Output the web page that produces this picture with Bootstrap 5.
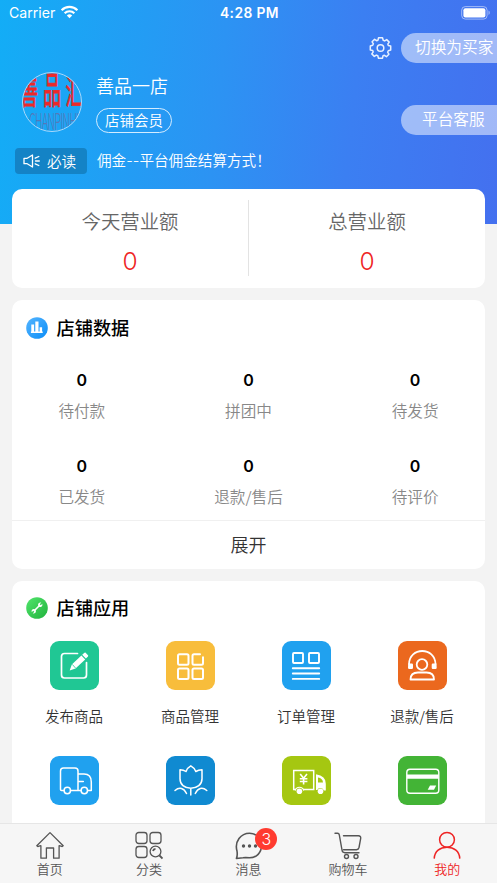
<!DOCTYPE html>
<html lang="zh-CN">
<head>
<meta charset="utf-8">
<meta name="viewport" content="width=device-width, initial-scale=1">
<title>我的店铺</title>
<link href="https://cdn.jsdelivr.net/npm/bootstrap@5.3.0/dist/css/bootstrap.min.css" rel="stylesheet">
<style>
body{height:883px;background:#f3f3f3;font-family:"Noto Sans CJK SC",sans-serif;font-weight:350;line-height:1;color:#444}
svg{display:block;flex:none}
.latin{font-family:Inter,"Noto Sans CJK SC",sans-serif}
.page-body{min-height:0}
.hero{height:224px;flex:none;background:linear-gradient(96deg,#13adf6 0%,#2c93f3 44%,#3b7ff2 70%,#4470ef 100%)}
.status-bar{height:33px;padding:6px 7px 0 9px;font-size:14.1px;line-height:14px}
.status-side{width:110px;gap:5px}
.wifi{margin-top:-1px}
.status-time{font-weight:600;font-size:13.8px;letter-spacing:.4px}
.hero-main{height:102px}
.profile{padding:39px 0 0 22px;gap:14px}
.shop-name{font-size:18px;line-height:20px;margin-top:3px}
.member{height:25px;width:76px;margin-top:13px;border:1px solid #d4ecff;font-size:14.5px;line-height:22px}
.settings{gap:7.5px}
.pill{width:96px;height:30px;background:rgba(255,255,255,.5);border-radius:15px 0 0 15px;font-size:15.7px;line-height:28.5px;white-space:nowrap}
.pill-switch{padding-left:14px}
.pill-service{padding-left:21px}
.notice{margin:13px 0 0 15px;font-size:14.6px}
.notice-tag{width:72px;height:26px;background:#1483c6;border-radius:4px;padding-left:8px;gap:7px}
.notice-text{margin-left:10px}
.panel{background:#fff;border-radius:10px;margin:0 12px 12px}
.revenue{height:99.5px;margin-top:-35.5px}
.revenue-item{padding-top:21.5px}
.revenue-label{font-size:19.4px;line-height:22px;color:#666}
.revenue-value{font-size:24.5px;line-height:26px;color:#ee2424;margin-top:16px}
.split{width:1px;height:76px;margin-top:11px;background:#e3e3e3}
.panel-title{font-size:18.2px;line-height:22px;color:#000;font-weight:500;padding:16.500px 0 0 14px;gap:8.500px}
.panel-title span{margin-top:-2px}
.shop-data{height:268.5px}
.counters{margin:32px -13.5px 0;row-gap:36.3px}
.counter{height:50px}
.counter-value{font-size:16px;line-height:18px;color:#000;font-weight:600}
.counter-label{font-size:15.600px;line-height:20px;color:#888;margin-top:11px}
.expand{height:48.500px;border-top:1.500px solid #f0f0f0;font-size:18px;line-height:46px;color:#333}
.apps{padding:22px 5px 0 4px}
.app-item{height:115.300px}
.app-label{font-size:14.500px;line-height:20px;margin-top:15.500px;color:#333}
.tabs{height:60px;flex:none;background:#f6f6f6;border-top:1px solid #e6e6e6;color:#555;font-size:13px}
.tab-item{padding-top:7px}
.tab-label{line-height:18px}
.tab-item.current{color:#ee2424}
.count-badge{left:56.500px;top:3.500px;width:22px;height:22px;background:#ff3b30;font-size:16px;line-height:22px}
</style>
</head>
<body class="d-flex flex-column overflow-hidden m-0">
<main class="page-body flex-grow-1 overflow-hidden d-flex flex-column">
  <header class="hero text-white">
    <div class="status-bar d-flex justify-content-between latin">
      <div class="status-side d-flex fw-normal"><span>Carrier</span>
        <svg class="wifi" width="19" height="14" viewBox="0 0 20 14"><g fill="none" stroke="#fff" stroke-width="2.3"><path d="M1.7 5.1a11.6 11.6 0 0 1 16.6 0"/><path d="M4.9 8.4a7.1 7.1 0 0 1 10.2 0"/></g><path d="M10 13.500 7.200 10.700a3.900 3.900 0 0 1 5.600 0z" fill="#fff"/></svg>
      </div>
      <div class="status-time">4:28 PM</div>
      <div class="status-side d-flex justify-content-end"><svg width="29" height="14" viewBox="0 0 29 14"><rect x=".7" y=".6" width="25.400" height="12.500" rx="3.600" fill="none" stroke="#fff" stroke-opacity=".5"/><rect x="2.400" y="2.300" width="22" height="9.100" rx="2" fill="#fff"/><path d="M27.500 4.600q1.300.6 1.300 2.200t-1.300 2.200z" fill="#fff" opacity=".5"/></svg></div>
    </div>
    <div class="hero-main d-flex justify-content-between">
      <div class="profile d-flex">
        <svg width="60" height="60" viewBox="0 0 60 60">
          <defs><clipPath id="round"><circle cx="30" cy="30" r="29.500"/></clipPath></defs>
          <g clip-path="url(#round)" text-anchor="middle" font-family="Noto Sans CJK SC">
            <g fill="#ec2929" stroke="#ec2929" stroke-width=".5" font-weight="400" font-size="20">
              <text transform="translate(7 32) scale(.9 1.720)">善</text>
              <text transform="translate(30 32) scale(.9 1.860)">品</text>
              <text transform="translate(52.500 32) scale(.9 1.720)">汇</text>
            </g>
            <text transform="translate(35.500 57.500) scale(.62 1.350)" font-size="17" font-weight="300" fill="#5877b7" textLength="92">CHANPINHUI</text>
          </g>
          <circle cx="30" cy="30" r="29.500" fill="none" stroke="#a9d8fa"/>
        </svg>
        <div>
          <div class="shop-name">善品一店</div>
          <div class="member rounded-pill text-center">店铺会员</div>
        </div>
      </div>
      <div class="d-flex flex-column justify-content-between align-items-end">
        <div class="settings d-flex align-items-center">
          <svg width="26" height="24" viewBox="-12.500 -12 26 24" fill="none" stroke="#e8f1ff" stroke-width="1.500" stroke-linejoin="round"><circle r="3.300"/><path d="M-2-10.200H2L2.700-7.800 4.200-7.100 6.200-8.400 8.700-5.900 7.300-3.900 7.800-2.500 10.200-2V2L7.800 2.700 7.100 4.200 8.400 6.200 5.900 8.700 3.900 7.300 2.500 7.800 2 10.200H-2L-2.700 7.800-4.200 7.100-6.200 8.400-8.700 5.900-7.300 3.900-7.800 2.500-10.200 2V-2L-7.800-2.700-7.100-4.200-8.400-6.200-5.900-8.700-3.900-7.300-2.500-7.800z"/></svg>
          <div class="pill pill-switch">切换为买家</div>
        </div>
        <div class="pill pill-service">平台客服</div>
      </div>
    </div>
    <div class="notice d-flex align-items-center">
      <div class="notice-tag d-flex align-items-center">
        <svg width="17" height="14" viewBox="0 0 17 14" fill="none" stroke="#fff" stroke-width="1.300" stroke-linecap="round" stroke-linejoin="round"><path d="M1 4.300h3.200L9.500 1v12L4.200 9.700H1zM12.200 4.200l3.600-1.700M12.500 7h3.800M12.200 9.800l3.600 1.700"/></svg>
        <span>必读</span>
      </div>
      <span class="notice-text">佣金<span class="latin">--</span>平台佣金结算方式！</span>
    </div>
  </header>

  <section class="panel revenue d-flex flex-shrink-0">
    <div class="revenue-item text-center flex-fill w-50">
      <div class="revenue-label">今天营业额</div><div class="revenue-value latin">0</div>
    </div>
    <div class="split flex-shrink-0"></div>
    <div class="revenue-item text-center flex-fill w-50">
      <div class="revenue-label">总营业额</div><div class="revenue-value latin">0</div>
    </div>
  </section>

  <section class="panel shop-data flex-shrink-0 d-flex flex-column">
    <div class="panel-title d-flex align-items-center">
      <svg width="22" height="22" viewBox="0 0 22 22"><defs><linearGradient id="blue" x2="1" y2="1"><stop stop-color="#55b5ff"/><stop offset="1" stop-color="#0b8df7"/></linearGradient></defs><circle cx="11" cy="11" r="10.800" fill="url(#blue)"/><path d="M5.300 7.500h2.800v7.600H5.300zM9.300 4.500h3.200v10.600H9.300zM13.600 10.300h2.500v4.800h-2.500zM4.900 14.600h11.800v1.300H4.900z" fill="#fff"/></svg>
      <span>店铺数据</span>
    </div>
    <div class="row g-0 counters text-center">
      <div class="col-4 counter"><div class="counter-value latin">0</div><div class="counter-label">待付款</div></div>
      <div class="col-4 counter"><div class="counter-value latin">0</div><div class="counter-label">拼团中</div></div>
      <div class="col-4 counter"><div class="counter-value latin">0</div><div class="counter-label">待发货</div></div>
      <div class="col-4 counter"><div class="counter-value latin">0</div><div class="counter-label">已发货</div></div>
      <div class="col-4 counter"><div class="counter-value latin">0</div><div class="counter-label">退款/售后</div></div>
      <div class="col-4 counter"><div class="counter-value latin">0</div><div class="counter-label">待评价</div></div>
    </div>
    <div class="expand text-center mt-auto">展开</div>
  </section>

  <section class="panel flex-shrink-0">
    <div class="panel-title d-flex align-items-center">
      <svg width="22" height="22" viewBox="0 0 22 22"><defs><linearGradient id="green" x2="1" y2="1"><stop stop-color="#52e56c"/><stop offset="1" stop-color="#20b23d"/></linearGradient></defs><circle cx="11" cy="11" r="10.800" fill="url(#green)"/><path d="M8 14 14 8" stroke="#fff" stroke-width="1.600"/><path d="M15.300 5.600 13.700 7.200l1.100 1.100 1.500-1.600q.6 2.100-.9 3-1 .6-2.100.1l-1-1q-.6-1.200.1-2.200 1.100-1.400 2.900-1M6.700 16.400l1.600-1.600-1.100-1.100-1.500 1.600q-.6-2.100.9-3 1-.6 2.100-.1l1 1q.6 1.200-.1 2.200-1.100 1.400-2.900 1" fill="#fff"/></svg>
      <span>店铺应用</span>
    </div>
    <div class="row g-0 apps text-center">
      <div class="col-3 app-item d-flex flex-column align-items-center">
        <svg width="49" height="49" viewBox="0 0 49 49"><rect width="49" height="49" rx="9" fill="#20c794"/><path d="M27.500 12.500H14.500a3 3 0 0 0-3 3v18.500a3 3 0 0 0 3 3h19a3 3 0 0 0 3-3V21.500" fill="none" stroke="#fff" stroke-width="1.700" stroke-linecap="round"/><path d="m21.800 23.500 9.600-8.900 3.800 3.900-9.700 9-5.800 1.900zM32.200 13.800l2.200-2 1-.3 2.800 3-.2.900-2.100 2z" fill="#fff"/><path d="m22.200 23.300 3.400 3.800" stroke="#20c794" stroke-width=".8"/></svg>
        <div class="app-label">发布商品</div>
      </div>
      <div class="col-3 app-item d-flex flex-column align-items-center">
        <svg width="49" height="49" viewBox="0 0 49 49"><rect width="49" height="49" rx="9" fill="#f8bd3b"/><g fill="none" stroke="#fff" stroke-width="2"><rect x="12" y="13.300" width="10.500" height="10.500" rx="1.500"/><rect x="12" y="27.500" width="10.500" height="10.500" rx="1.500"/><rect x="26.500" y="27.500" width="10.500" height="10.500" rx="1.500"/><path d="M34 13.300h-6a1.500 1.500 0 0 0-1.500 1.500v7.500a1.500 1.500 0 0 0 1.500 1.500h7.500a1.500 1.500 0 0 0 1.500-1.500v-6" stroke-linecap="round"/></g></svg>
        <div class="app-label">商品管理</div>
      </div>
      <div class="col-3 app-item d-flex flex-column align-items-center">
        <svg width="49" height="49" viewBox="0 0 49 49"><rect width="49" height="49" rx="9" fill="#20a1ef"/><g fill="none" stroke="#fff" stroke-width="1.900"><rect x="11" y="12" width="10" height="10" rx="1"/><rect x="27" y="12" width="10" height="10" rx="1"/><path d="M10.800 27.200h26.400M10.800 32.500h26.400M10.800 37.900h26.400" stroke-linecap="round"/></g></svg>
        <div class="app-label">订单管理</div>
      </div>
      <div class="col-3 app-item d-flex flex-column align-items-center">
        <svg width="49" height="49" viewBox="0 0 49 49"><rect width="49" height="49" rx="9" fill="#eb681e"/><g fill="none" stroke="#fff" stroke-width="1.800"><path d="M11 23.500C11 5.500 37.500 5.500 37.500 23.500"/><circle cx="24" cy="23.500" r="5.300"/><path d="M12.500 38.500c0-4.500 3-7 7.500-7h8.500c4.500 0 7.500 2.500 7.500 7z" stroke-linejoin="round"/></g><path d="M10.200 22.500h3.600q1.200 0 1.200 1.300v2.900q0 1.300-1.200 1.300h-2.600q-1.200 0-1.200-1.300zM38.500 22.500h-3.600q-1.200 0-1.200 1.300v2.900q0 1.300 1.200 1.300h2.600q1.200 0 1.200-1.300z" fill="#fff"/></svg>
        <div class="app-label">退款/售后</div>
      </div>
      <div class="col-3 app-item d-flex flex-column align-items-center">
        <svg width="49" height="49" viewBox="0 0 49 49"><rect width="49" height="49" rx="9" fill="#20a1ef"/><g fill="none" stroke="#fff" stroke-width="1.500" stroke-linecap="round" stroke-linejoin="round"><path d="M14 34.500h-2.500q-1 0-1-1V15q0-3 3-3H25q3 0 3 3v19.500h3M20.500 34.500H28M28 18h6q7.300 0 7.300 8v8.500h-3.500M28 25.500h5.300"/><circle cx="17.300" cy="34.500" r="3.200"/><circle cx="34.300" cy="34.500" r="3.200"/></g></svg>
      </div>
      <div class="col-3 app-item d-flex flex-column align-items-center">
        <svg width="49" height="49" viewBox="0 0 49 49"><rect width="49" height="49" rx="9" fill="#108ad1"/><g fill="none" stroke="#fff" stroke-width="1.500" stroke-linecap="round" stroke-linejoin="round"><path d="M24.800 9.800q-3.700 2-4.800 5.700-2.400-1.600-6-1.800v9.100c0 5.700 4.400 9.400 10.800 9.400S36 28.500 36 22.800v-9.100q-3.600.2-6.200 1.800-1.300-3.700-5-5.700zM24.800 32.200v6.800M9 34.500c4.500-4 9-2.500 11.500 3M40.800 34.500c-4.500-4-9-2.500-11.500 3"/></g></svg>
      </div>
      <div class="col-3 app-item d-flex flex-column align-items-center">
        <svg width="49" height="49" viewBox="0 0 49 49"><rect width="49" height="49" rx="9" fill="#a5c711"/><g fill="none" stroke="#fff" stroke-width="1.500"><path d="M13.700 33.500H11.700V14.500h20v19H21"/><path d="m18.200 18 3.400 4.200L25 18M21.600 22v6.500M17.800 22.700h7.600M17.800 25.500h7.600" stroke-width="1.600"/></g><path fill-rule="evenodd" d="M34 18.200q10 1.500 9.800 9.500v6.800h-2a3.500 3.500 0 0 0-6.600-.5H34zM36 21.500v5h5q-.3-4.200-5-5z" fill="#fff"/><circle cx="17.400" cy="35.200" r="2.800" fill="#fff"/><path d="M13.200 34.500a4.400 4.400 0 0 1 8.500 0" fill="none" stroke="#fff" stroke-width="1.200"/><circle cx="38.500" cy="35.200" r="2.800" fill="#fff"/></svg>
      </div>
      <div class="col-3 app-item d-flex flex-column align-items-center">
        <svg width="49" height="49" viewBox="0 0 49 49"><rect width="49" height="49" rx="9" fill="#43b436"/><rect x="8.800" y="13.200" width="32" height="24" rx="3.200" fill="none" stroke="#fff" stroke-width="1.400"/><path d="M9 18.500h31.700v4.300H9zM32 29.500h6.200l-2.200 4.200h-6.300z" fill="#fff"/></svg>
      </div>
    </div>
  </section>
</main>

<nav class="tabs d-flex text-center">
  <div class="tab-item flex-fill w-100 d-flex flex-column align-items-center">
    <svg width="28" height="29" viewBox="0 0 28 29" fill="none" stroke="currentColor" stroke-width="1.300" stroke-linejoin="round"><path d="M14 1.600.8 14.700q.7 1.200 2.200.5l1.900-.5v12.500h5.500V17h7.200v10.200h5.500V14.700l1.900.5q1.500.7 2.200-.5z"/></svg>
    <div class="tab-label">首页</div>
  </div>
  <div class="tab-item flex-fill w-100 d-flex flex-column align-items-center">
    <svg width="28" height="29" viewBox="0 0 28 29" fill="none" stroke="currentColor" stroke-width="1.300"><rect x="1" y="1.500" width="11" height="11" rx="2.800"/><rect x="15" y="1.500" width="11" height="11" rx="2.800"/><rect x="1" y="15.500" width="11" height="11" rx="2.800"/><circle cx="20.500" cy="20.500" r="5.400"/><path d="M18 20a2.800 2.800 0 0 1 2.500-2.200M24.500 24.500l3 3" stroke-width="1.800"/></svg>
    <div class="tab-label">分类</div>
  </div>
  <div class="tab-item flex-fill w-100 d-flex flex-column align-items-center position-relative">
    <svg width="28" height="29" viewBox="0 0 28 29"><path d="M1.400 27.500q1.300-3 .6-7.500-2-7 2-12.500 4-5.300 10.500-5.300c7 0 12 5.400 12 12.400s-5 12.200-12 12.200q-4.500-.3-6.500 0z" fill="none" stroke="currentColor" stroke-width="1.600" stroke-linejoin="round"/><g fill="currentColor"><circle cx="8.500" cy="15" r="1.700"/><circle cx="14.500" cy="15" r="1.700"/><circle cx="20.500" cy="15" r="1.700"/></g></svg>
    <div class="tab-label">消息</div>
    <span class="count-badge position-absolute rounded-circle text-white latin">3</span>
  </div>
  <div class="tab-item flex-fill w-100 d-flex flex-column align-items-center">
    <svg width="28" height="29" viewBox="0 0 28 29" fill="none" stroke="currentColor" stroke-width="1.400" stroke-linecap="round" stroke-linejoin="round"><path d="M1 2.300h2.500q1.500 0 1.800 1.600L8 19q.3 2.700 2.800 2.700H25M9.500 4.800h15q2.500 0 2.200 2.500L25 16.500q-.5 2-2.500 2.200H9.500"/><circle cx="12.500" cy="25.500" r="2"/><circle cx="22" cy="25.500" r="2"/></svg>
    <div class="tab-label">购物车</div>
  </div>
  <div class="tab-item current flex-fill w-100 d-flex flex-column align-items-center">
    <svg width="28" height="29" viewBox="0 0 28 29" fill="none" stroke="currentColor" stroke-width="1.500"><circle cx="14" cy="8.800" r="7.400"/><path d="M1.200 27.600C1.500 20.200 7 16.200 14 16.200s12.500 4 12.800 11.400"/></svg>
    <div class="tab-label">我的</div>
  </div>
</nav>
<script src="https://cdn.jsdelivr.net/npm/bootstrap@5.3.0/dist/js/bootstrap.bundle.min.js"></script>
</body>
</html>
